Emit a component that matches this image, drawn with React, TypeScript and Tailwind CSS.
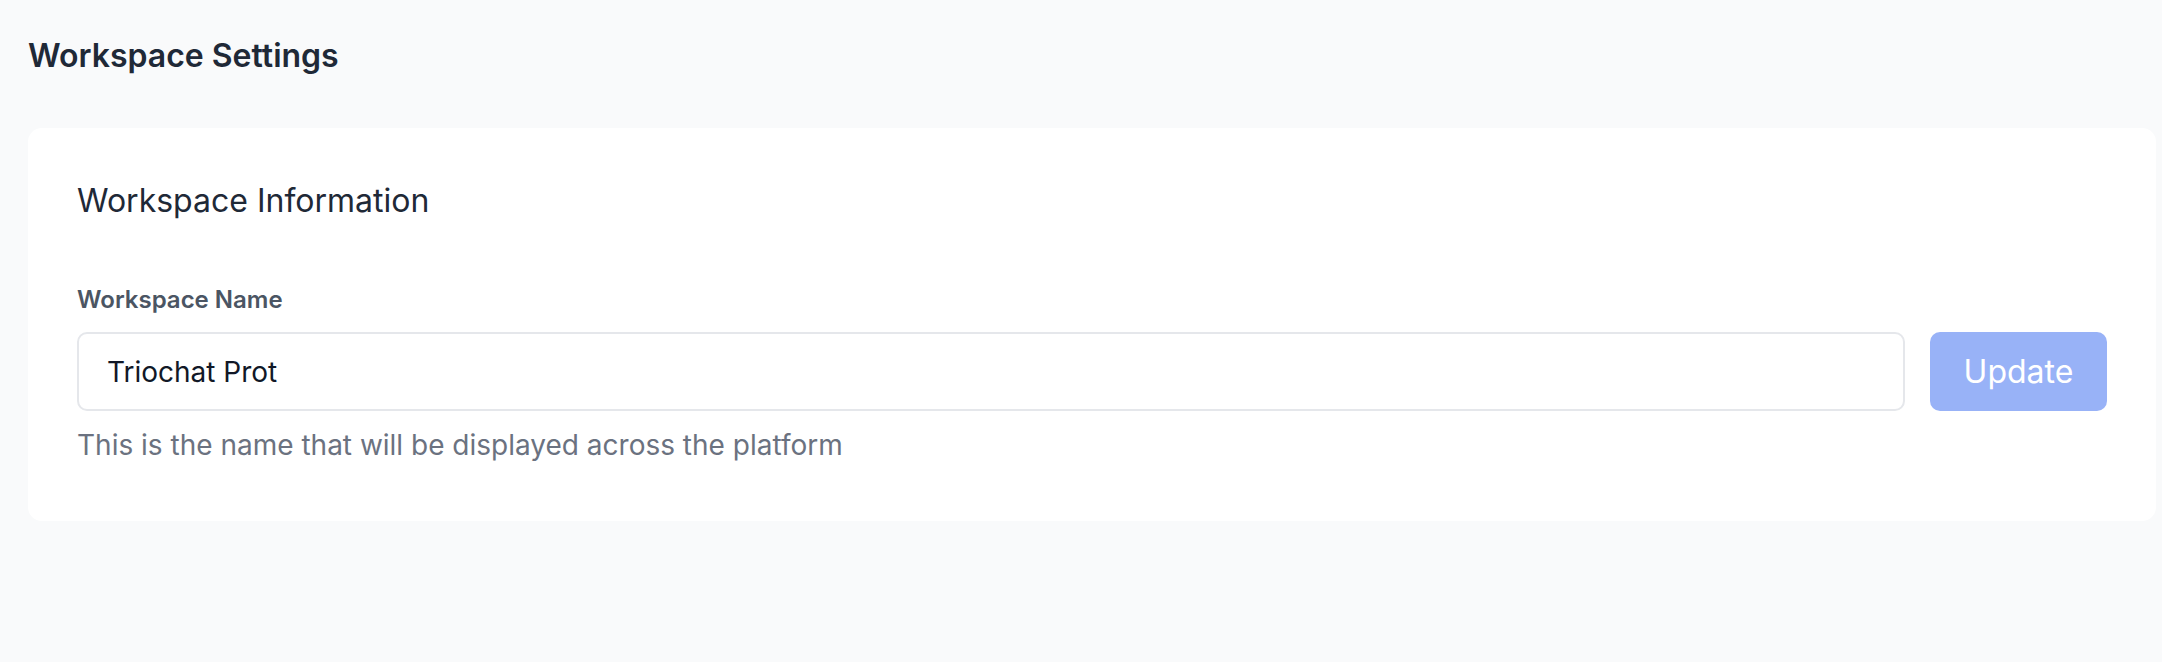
export default function App() {
  return (
    <div className="min-h-screen bg-[#f9fafb] pl-[28px] pr-[6px] pt-[36px] font-['Inter',_'Liberation_Sans',_sans-serif]">
      <h1 className="text-[32px] leading-[40px] font-semibold text-[#1f2937]">Workspace Settings</h1>

      {/* Card */}
      <div className="mt-[52px] bg-white rounded-[14px] pl-[49px] pr-[49px] pt-[53px] pb-[58px]">
        <h2 className="text-[32px] leading-[40px] font-normal text-[#1f2937]">Workspace Information</h2>

        <div className="mt-[63px]">
          <label className="block text-[24px] leading-[32px] font-semibold text-[#4b5563]">Workspace Name</label>
          <div className="mt-[16px] flex items-stretch gap-[25px]">
            <input
              type="text"
              defaultValue="Triochat Prot"
              className="flex-1 h-[79px] px-[28px] border-2 border-[#e5e7eb] rounded-[10px] text-[28px] text-[#111827] bg-white focus:outline-none"
            />
            <button className="w-[177px] h-[79px] rounded-[10px] bg-[#98b2f7] text-white text-[32px] font-normal">
              Update
            </button>
          </div>
          <p className="mt-[16px] text-[28px] leading-[36px] text-[#6b7280]">
            This is the name that will be displayed across the platform
          </p>
        </div>
      </div>
    </div>
  );
}
